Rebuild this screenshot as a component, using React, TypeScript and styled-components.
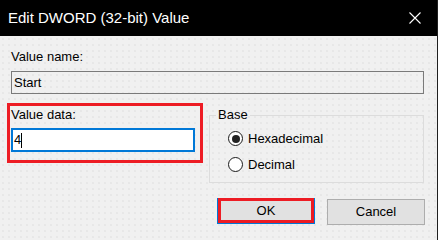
import React from 'react';
import styled, {createGlobalStyle} from 'styled-components';

const GlobalStyle = createGlobalStyle`
  html, body {
    margin: 0;
    padding: 0;
    background: #f0f0f0;
  }
  * {
    box-sizing: border-box;
  }
`;

const Window = styled.div`
  width: 438px;
  height: 240px;
  display: flex;
  flex-direction: column;
  background-color: #f0f0f0;
  background-image: radial-gradient(#e2e2e2 0.6px, transparent 0.9px);
  background-size: 6px 6px;
  border-right: 1px solid #1f1f1f;
  font-family: 'Liberation Sans', Arial, sans-serif;
  font-size: 13px;
  color: #000;
  overflow: hidden;
`;

const TitleBar = styled.div`
  height: 36px;
  flex: none;
  display: flex;
  align-items: center;
  background: #000;
  color: #fff;
  padding-left: 8px;
`;

const Title = styled.div`
  flex: 1;
  font-size: 15px;
  line-height: 20px;
  margin-top: -1px;
`;

const CloseButton = styled.div`
  width: 44px;
  height: 36px;
  display: flex;
  align-items: center;
  justify-content: center;
  margin-top: -1px;
`;

const Content = styled.div`
  flex: 1;
  display: flex;
  flex-direction: column;
  padding: 13px 13px 0 11px;
`;

const Label = styled.div`
  line-height: 16px;
  white-space: nowrap;
`;

const NameBox = styled.div`
  height: 23px;
  margin-top: 6px;
  border: 1px solid #7a7a7a;
  display: flex;
  align-items: center;
  padding-left: 2px;
  line-height: 16px;
`;

const Row = styled.div`
  display: flex;
  align-items: flex-start;
  gap: 6px;
  margin-top: 9px;
  margin-left: -4px;
`;

const Highlight = styled.div`
  width: 196px;
  height: 60px;
  border: 3px solid #ed1c24;
  padding: 1px 5px 0 1px;
  display: flex;
  flex-direction: column;
`;

const DataInput = styled.div`
  height: 24px;
  margin-top: 5px;
  border: 2px solid #0078d7;
  background: #fff;
  display: flex;
  align-items: center;
  padding-left: 1px;
  line-height: 16px;
`;

const Caret = styled.span`
  display: inline-block;
  width: 1px;
  height: 15px;
  background: #000;
`;

const GroupBox = styled.fieldset`
  flex: 1;
  height: 76px;
  margin: 4px 0 0 0;
  padding: 0 0 0 6px;
  border: 1px solid #dcdcdc;
  min-width: 0;
`;

const Legend = styled.legend`
  padding: 0 2px;
  line-height: 16px;
`;

const RadioList = styled.div`
  display: flex;
  flex-direction: column;
  gap: 9px;
  margin: 7px 0 0 12px;
`;

const RadioRow = styled.div`
  display: flex;
  align-items: center;
  gap: 5px;
  height: 17px;
  line-height: 16px;
`;

const RadioCircle = styled.span<{checked?: boolean}>`
  width: 15px;
  height: 15px;
  border-radius: 50%;
  border: 1px solid #1a1a1a;
  background: #fff;
  display: flex;
  align-items: center;
  justify-content: center;
  flex: none;

  &::after {
    content: '';
    width: 8px;
    height: 8px;
    border-radius: 50%;
    background: ${p => (p.checked ? '#222' : 'transparent')};
  }
`;

const ButtonRow = styled.div`
  display: flex;
  justify-content: flex-end;
  gap: 12px;
  margin-top: 15px;
  margin-right: -1px;
`;

const Button = styled.div<{primary?: boolean}>`
  position: relative;
  width: 98px;
  height: 26px;
  display: flex;
  align-items: center;
  justify-content: center;
  background: #e1e1e1;
  border: ${p => (p.primary ? '2px solid #0078d7' : '1px solid #adadad')};
  line-height: 16px;
  margin-top: ${p => (p.primary ? '0' : '1px')};
`;

const RedMark = styled.span`
  position: absolute;
  top: -2px;
  left: -1px;
  right: -1px;
  bottom: -1px;
  border: 3px solid #ed1c24;
`;

const CloseIcon = () => (
  <svg width="12" height="12" viewBox="0 0 12 12">
    <path d="M0.5 0.5 L11.5 11.5 M11.5 0.5 L0.5 11.5" stroke="#fff" strokeWidth="1.1" />
  </svg>
);

const App = () => {
  return (
    <>
      <GlobalStyle />
      <Window>
        <TitleBar>
          <Title>Edit DWORD (32-bit) Value</Title>
          <CloseButton>
            <CloseIcon />
          </CloseButton>
        </TitleBar>
        <Content>
          <Label>Value name:</Label>
          <NameBox>Start</NameBox>
          <Row>
            <Highlight>
              <Label>Value data:</Label>
              <DataInput>
                4<Caret />
              </DataInput>
            </Highlight>
            <GroupBox>
              <Legend>Base</Legend>
              <RadioList>
                <RadioRow>
                  <RadioCircle checked />
                  Hexadecimal
                </RadioRow>
                <RadioRow>
                  <RadioCircle />
                  Decimal
                </RadioRow>
              </RadioList>
            </GroupBox>
          </Row>
          <ButtonRow>
            <Button primary>
              OK
              <RedMark />
            </Button>
            <Button>Cancel</Button>
          </ButtonRow>
        </Content>
      </Window>
    </>
  );
};

export default App;
